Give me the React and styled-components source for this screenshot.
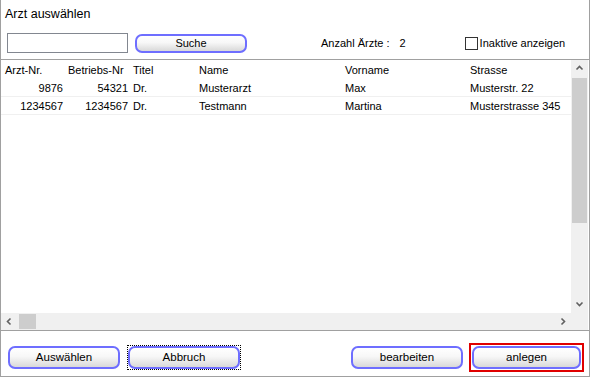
import React from "react";
import styled, { createGlobalStyle } from "styled-components";

const Global = createGlobalStyle`
  html, body { margin: 0; padding: 0; background: #fff; }
  body { font-family: "Liberation Sans", Arial, sans-serif; font-size: 11px; color: #000; }
`;

const Window = styled.div`
  width: 588px;
  height: 376px;
  border-left: 1px solid #a0a0a0;
  border-right: 1px solid #a0a0a0;
  border-bottom: 1px solid #a0a0a0;
  box-shadow: 1px 0 0 #4a4e66;
  background: #fff;
  display: flex;
  flex-direction: column;
  overflow: hidden;
`;

const Title = styled.div`
  height: 28px;
  padding-left: 4px;
  display: flex;
  align-items: center;
  font-size: 12.5px;
  padding-bottom: 1px;
  box-sizing: border-box;
`;

const Toolbar = styled.div`
  height: 31px;
  display: flex;
  align-items: flex-start;
  padding-top: 5px;
  padding-left: 6px;
  box-sizing: border-box;
`;

const SearchInput = styled.input`
  width: 121px;
  height: 20px;
  box-sizing: border-box;
  border: 1px solid #828790;
  margin: 0;
  padding: 0 3px;
  font: inherit;
  outline: none;
`;

const Button = styled.button`
  width: ${(p) => p.$w || 112}px;
  height: 23px;
  box-sizing: border-box;
  border: 2px solid #6e6eff;
  border-radius: 7px;
  background: linear-gradient(to bottom, #ffffff 0%, #f7f7f7 45%, #e8e8e8 72%, #d9d9d9 100%);
  font: inherit;
  font-size: 11.5px;
  color: #000;
  padding: 0 0 1px 0;
  margin: 0;
  cursor: pointer;
`;

const SmallButton = styled(Button)`
  height: 19px;
  font-size: 11px;
  margin-left: ${(p) => p.$ml || 0}px;
  margin-top: 1px;
`;

const Count = styled.div`
  margin-left: 74px;
  height: 20px;
  display: flex;
  align-items: center;
  gap: 10px;
`;

const CheckLabel = styled.label`
  margin-left: 59px;
  height: 20px;
  display: flex;
  align-items: center;
  gap: 2px;
  font-size: 11px;
`;

const Box = styled.span`
  width: 13px;
  height: 13px;
  box-sizing: border-box;
  border: 1px solid #333;
  background: #fff;
  display: inline-block;
`;

const Grid = styled.div`
  height: 272px;
  border-top: 1px solid #a0a0a0;
  border-bottom: 1px solid #a0a0a0;
  box-sizing: border-box;
  display: grid;
  grid-template-columns: 1fr 17px;
  grid-template-rows: 1fr 17px;
`;

const Body = styled.div`
  overflow: hidden;
  background: #fff;
`;

const Row = styled.div`
  height: ${(p) => (p.$head ? 18 : 17)}px;
  display: grid;
  grid-template-columns: 62px 65px 66px 146px 125px 1fr;
  align-items: center;
  border-bottom: 1px solid ${(p) => (p.$head ? "transparent" : "#f0f0f0")};
  box-sizing: content-box;
  font-size: 11px;
`;

const Cell = styled.div`
  text-align: ${(p) => (p.$right ? "right" : "left")};
  padding-left: ${(p) => (p.$pl != null ? p.$pl : 4)}px;
  padding-top: 1px;
  white-space: nowrap;
`;

const VScroll = styled.div`
  background: #f0f0f0;
  display: flex;
  flex-direction: column;
  align-items: center;
  margin-right: 1px;
  margin-left: -1px;
`;

const HScroll = styled.div`
  background: #f0f0f0;
  display: flex;
  align-items: center;
`;

const Corner = styled.div`
  background: #f0f0f0;
  margin-right: 1px;
  margin-left: -1px;
`;

const ArrowBtn = styled.div`
  width: 17px;
  height: 17px;
  flex: none;
  display: flex;
  align-items: center;
  justify-content: center;
`;

const VThumb = styled.div`
  width: 15px;
  height: 145px;
  background: #cdcdcd;
  margin-top: 1px;
`;

const HThumb = styled.div`
  width: 17px;
  height: 15px;
  background: #cdcdcd;
  margin-left: 1px;
`;

const Spacer = styled.div`
  flex: 1;
`;

const Footer = styled.div`
  flex: 1;
  display: flex;
  align-items: flex-start;
  padding-top: 15px;
  padding-left: 7px;
  box-sizing: border-box;
`;

const Focus = styled.div`
  border: 1px dotted #000;
  margin-left: ${(p) => p.$ml || 0}px;
  margin-top: -1px;
  display: flex;
`;

const Default = styled.div`
  border: 2px solid #e00000;
  padding: 1px;
  margin-left: ${(p) => p.$ml || 0}px;
  margin-top: -3px;
  display: flex;
`;

const FooterButton = styled(Button)`
  margin-left: ${(p) => p.$ml || 0}px;
`;

const Chevron = ({ dir }) => {
  const paths = {
    up: "M1.5 5.5 L4.5 2.5 L7.5 5.5",
    down: "M1.5 2.5 L4.5 5.5 L7.5 2.5",
    left: "M5.5 1.5 L2.5 4.5 L5.5 7.5",
    right: "M2.5 1.5 L5.5 4.5 L2.5 7.5",
  };
  return (
    <svg width="9" height="9" viewBox="0 0 9 9">
      <path d={paths[dir]} fill="none" stroke="#606060" strokeWidth="1.6" />
    </svg>
  );
};

const data = [
  { nr: "9876", bnr: "54321", titel: "Dr.", name: "Musterarzt", vorname: "Max", strasse: "Musterstr. 22" },
  { nr: "1234567", bnr: "1234567", titel: "Dr.", name: "Testmann", vorname: "Martina", strasse: "Musterstrasse 345" },
];

export default function App() {
  return (
    <>
      <Global />
      <Window>
        <Title>Arzt auswählen</Title>
        <Toolbar>
          <SearchInput />
          <SmallButton $w={112} $ml={7}>Suche</SmallButton>
          <Count>
            <span>Anzahl Ärzte :</span>
            <span>2</span>
          </Count>
          <CheckLabel>
            <Box />
            <span>Inaktive anzeigen</span>
          </CheckLabel>
        </Toolbar>
        <Grid>
          <Body>
            <Row $head>
              <Cell>Arzt-Nr.</Cell>
              <Cell $pl={5}>Betriebs-Nr</Cell>
              <Cell $pl={5}>Titel</Cell>
              <Cell $pl={5}>Name</Cell>
              <Cell $pl={5}>Vorname</Cell>
              <Cell $pl={5}>Strasse</Cell>
            </Row>
            {data.map((d) => (
              <Row key={d.nr}>
                <Cell $right $pl={0}>{d.nr}</Cell>
                <Cell $right $pl={0}>{d.bnr}</Cell>
                <Cell $pl={5}>{d.titel}</Cell>
                <Cell $pl={5}>{d.name}</Cell>
                <Cell $pl={5}>{d.vorname}</Cell>
                <Cell $pl={5}>{d.strasse}</Cell>
              </Row>
            ))}
          </Body>
          <VScroll>
            <ArrowBtn><Chevron dir="up" /></ArrowBtn>
            <VThumb />
            <Spacer />
            <ArrowBtn><Chevron dir="down" /></ArrowBtn>
          </VScroll>
          <HScroll>
            <ArrowBtn><Chevron dir="left" /></ArrowBtn>
            <HThumb />
            <Spacer />
            <ArrowBtn><Chevron dir="right" /></ArrowBtn>
          </HScroll>
          <Corner />
        </Grid>
        <Footer>
          <FooterButton $w={112} $ml={0}>Auswählen</FooterButton>
          <Focus $ml={7}>
            <Button $w={112}>Abbruch</Button>
          </Focus>
          <FooterButton $w={112} $ml={110}>bearbeiten</FooterButton>
          <Default $ml={6}>
            <Button $w={109}>anlegen</Button>
          </Default>
        </Footer>
      </Window>
    </>
  );
}
